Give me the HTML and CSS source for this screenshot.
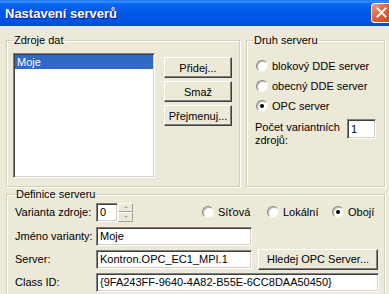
FILE: index.html
```html
<!DOCTYPE html>
<html lang="cs">
<head>
    <meta charset="UTF-8">
    <title>Nastavení serverů</title>
    <link rel="stylesheet" href="styles.css">
</head>
<body>
    <div class="titlebar">
        <span class="title">Nastavení serverů</span>
        <span class="close">
            <svg width="11" height="11" viewBox="0 0 11 11"><path d="M1.5 1.5 L9.5 9.5 M9.5 1.5 L1.5 9.5" stroke="#fff" stroke-width="2" stroke-linecap="square"/></svg>
        </span>
    </div>
    <div class="dialog">
        <div class="top-row">
            <fieldset class="group sources">
                <legend>Zdroje dat</legend>
                <div class="sources-body">
                    <div class="listbox">
                        <div class="item selected">Moje</div>
                    </div>
                    <div class="buttons">
                        <button class="btn">Přidej...</button>
                        <button class="btn">Smaž</button>
                        <button class="btn">Přejmenuj...</button>
                    </div>
                </div>
            </fieldset>
            <fieldset class="group kind">
                <legend>Druh serveru</legend>
                <div class="radio-list">
                    <div class="radio"><span class="radio-dot"></span>blokový DDE server</div>
                    <div class="radio"><span class="radio-dot"></span>obecný DDE server</div>
                    <div class="radio"><span class="radio-dot on"></span>OPC server</div>
                </div>
                <div class="count-row">
                    <span class="count-label">Počet variantních<br>zdrojů:</span>
                    <span class="field count">1</span>
                </div>
            </fieldset>
        </div>
        <fieldset class="group definition">
            <legend>Definice serveru</legend>
            <div class="form-row first">
                <span class="label">Varianta zdroje:</span>
                <span class="field spin-value">0</span>
                <span class="spin">
                    <span class="spin-btn up"></span>
                    <span class="spin-btn down"></span>
                </span>
                <div class="scope">
                    <div class="radio"><span class="radio-dot"></span>Síťová</div>
                    <div class="radio"><span class="radio-dot"></span>Lokální</div>
                    <div class="radio"><span class="radio-dot on"></span>Obojí</div>
                </div>
            </div>
            <div class="form-row">
                <span class="label">Jméno varianty:</span>
                <span class="field medium">Moje</span>
            </div>
            <div class="form-row">
                <span class="label">Server:</span>
                <span class="field medium">Kontron.OPC_EC1_MPI.1</span>
                <button class="btn find">Hledej OPC Server...</button>
            </div>
            <div class="form-row">
                <span class="label">Class ID:</span>
                <span class="field wide">{9FA243FF-9640-4A82-B55E-6CC8DAA50450}</span>
            </div>
        </fieldset>
    </div>
</body>
</html>
```

FILE: styles.css
```css
* {
    box-sizing: border-box;
}
body {
    margin: 0;
    width: 389px;
    height: 294px;
    overflow: hidden;
    background: #ece9d8;
    font-family: "Liberation Sans", Arial, sans-serif;
    font-size: 11px;
    color: #000;
}
.titlebar {
    height: 26px;
    display: flex;
    align-items: center;
    justify-content: space-between;
    padding-left: 5px;
    overflow: hidden;
    background: linear-gradient(#0a5ee8 0, #3d95ff 1px, #0a66f2 4px, #0058e6 12px, #0054e3 20px, #004bd4 26px);
    color: #fff;
    font-size: 13px;
    font-weight: bold;
    text-shadow: 1px 1px 0 #0a1a8a;
}
.close {
    width: 21px;
    height: 20px;
    margin-right: -3px;
    margin-top: -1px;
    border: 1px solid #fff;
    border-radius: 3px;
    background: linear-gradient(135deg, #f0a083 0%, #e0633b 45%, #c9431e 100%);
    display: flex;
    align-items: center;
    justify-content: center;
}
.dialog {
    padding: 8px 4px 0 6px;
}
.top-row {
    display: flex;
    gap: 6px;
}
.group {
    margin: 0;
    min-width: 0;
    padding: 6px 6px 8px 6px;
    border: 1px solid #d0d0bf;
    box-shadow: inset 1px 1px 0 #fff, 1px 1px 0 #fff;
}
.group legend {
    padding: 0 1px;
    line-height: 13px;
}
.sources {
    width: 234px;
}
.kind {
    width: 139px;
}
.sources-body {
    display: flex;
}
.listbox {
    width: 142px;
    height: 125px;
    background: #fff;
    border: 1px solid;
    border-color: #808080 #fff #fff #808080;
    box-shadow: inset 1px 1px 0 #404040, inset -1px -1px 0 #d4d0c8;
    padding: 1px;
}
.item {
    height: 14px;
    line-height: 14px;
    padding-left: 2px;
}
.item.selected {
    background: #316ac5;
    color: #fff;
}
.buttons {
    margin-left: 9px;
    padding-top: 4px;
    display: flex;
    flex-direction: column;
    gap: 3px;
}
.btn {
    width: 68px;
    height: 21px;
    padding: 0;
    font: inherit;
    color: #000;
    white-space: nowrap;
    background: #ece9d8;
    border: 1px solid;
    border-color: #fff #404040 #404040 #fff;
    box-shadow: inset -1px -1px 0 #808080;
}
.radio-list {
    margin: 3px 0 0 3px;
}
.radio {
    display: flex;
    align-items: center;
    gap: 4px;
    height: 20px;
    white-space: nowrap;
}
.radio-dot {
    flex: none;
    width: 12px;
    height: 12px;
    border-radius: 50%;
    background: #fff;
    border: 1px solid;
    border-color: #8a8a80 #f4f4f0 #f4f4f0 #8a8a80;
    box-shadow: inset 1px 1px 0 #b8b8b0;
    display: flex;
    align-items: center;
    justify-content: center;
}
.radio-dot.on::after {
    content: "";
    width: 4px;
    height: 4px;
    border-radius: 50%;
    background: #000;
}
.count-row {
    display: flex;
    align-items: flex-start;
    margin: 3px 0 0 2px;
}
.count-label {
    width: 92px;
    flex: none;
    line-height: 13px;
    padding-top: 2px;
    white-space: nowrap;
}
.field {
    flex: none;
    display: flex;
    align-items: center;
    height: 19px;
    padding: 0 3px;
    background: #fff;
    border: 1px solid;
    border-color: #808080 #fff #fff #808080;
    box-shadow: inset 1px 1px 0 #404040, inset -1px -1px 0 #d4d0c8;
    white-space: nowrap;
    overflow: hidden;
}
.count {
    width: 29px;
    height: 20px;
}
.definition {
    margin-top: 1px;
    width: 379px;
    padding: 1px 6px 6px 8px;
}
.form-row {
    display: flex;
    align-items: center;
    height: 20px;
    margin-top: 3px;
}
.form-row.first {
    margin-top: 0;
}
.form-row:nth-child(3) {
    margin-top: 4px;
}
.label {
    flex: none;
    width: 81px;
    white-space: nowrap;
}
.spin-value {
    width: 22px;
    height: 19px;
}
.spin {
    flex: none;
    display: flex;
    flex-direction: column;
    height: 19px;
}
.spin-btn {
    width: 15px;
    height: 9.5px;
    background: #ece9d8;
    border: 1px solid;
    border-color: #fff #a0a0a0 #a0a0a0 #fff;
    display: flex;
    align-items: center;
    justify-content: center;
}
.spin-btn::after {
    content: "";
    border-left: 2px solid transparent;
    border-right: 2px solid transparent;
}
.spin-btn.up::after {
    border-bottom: 2px solid #a8a8a0;
}
.spin-btn.down::after {
    border-top: 2px solid #a8a8a0;
}
.scope {
    display: flex;
    margin-left: 69px;
}
.scope .radio {
    width: 65px;
}
.medium {
    width: 156px;
}
.wide {
    width: 283px;
}
.btn.find {
    width: 121px;
    margin-left: 6px;
}
```
